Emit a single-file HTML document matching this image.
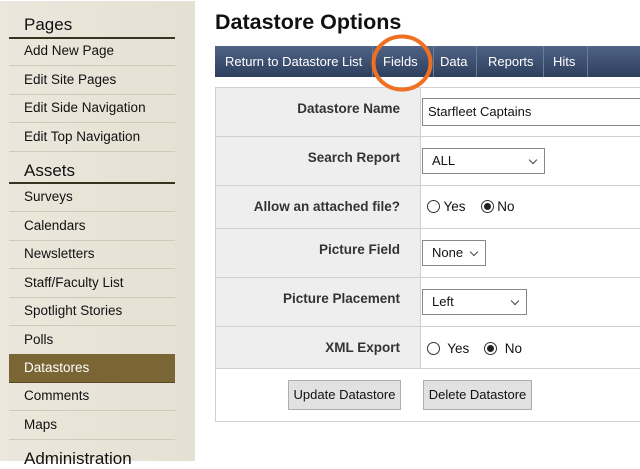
<!DOCTYPE html>
<html><head><style>
*{margin:0;padding:0;box-sizing:border-box}
body{width:640px;height:460px;overflow:hidden;font-family:"Liberation Sans",Arial,sans-serif;background:#fff;position:relative}
#side{position:absolute;left:0;top:1px;width:195px;height:460px;background:linear-gradient(90deg,#ebe7dc,#e4e0d3)}
.h{position:absolute;left:24px;font-size:17px;color:#111}
.ul{position:absolute;left:9px;width:166px;height:2px;background:#3a3220}
.it{position:absolute;left:9px;width:166px;height:28.5px;border-bottom:1px solid #cfc9b6;font-size:13.5px;color:#111;padding-left:15px;line-height:28px}
.it.sel{background:#7a6534;color:#fff;border-bottom:1px solid #5a4a24}
h1{position:absolute;left:215px;top:10px;font-size:21.5px;font-weight:bold;color:#111}
#nav{position:absolute;left:215px;top:46px;width:425px;height:31px;background:linear-gradient(#4f6385,#2e3f5e);color:#fff;font-size:13px}
#nav span{position:absolute;top:0;height:31px;line-height:32px;border-right:1px solid #6b7d9c}
#tbl{position:absolute;left:215px;top:87px;width:430px;height:335px;border:1px solid #d0d0d0}
.row{position:absolute;left:0;width:430px;border-bottom:1px solid #d0d0d0}
.lab{position:absolute;left:0;top:0;bottom:0;width:205px;background:#eeeeee;border-right:1px solid #d0d0d0;text-align:right;padding-right:20px;padding-top:13px;font-size:13.5px;font-weight:bold;color:#333}
.sel2{position:absolute;border:1px solid #888;background:#fff;font-size:13px;color:#111;padding-left:9px;line-height:24px;height:26px}
.sel2:after{content:"";position:absolute;right:8px;top:8px;width:5px;height:5px;border-right:1px solid #444;border-bottom:1px solid #444;transform:rotate(45deg)}
.rad{position:absolute;font-size:13.5px;color:#111}
.c{display:inline-block;width:13px;height:13px;border:1px solid #333;border-radius:50%;vertical-align:-2px;position:relative;background:#fff}
.c.on:after{content:"";position:absolute;left:2px;top:2px;width:7px;height:7px;border-radius:50%;background:#222}
.btn{position:absolute;top:12px;height:30px;background:#e1e1e1;border:1px solid #adadad;font-size:13px;color:#111;line-height:28px;text-align:center}
</style></head><body>
<div id="side">
<div class="h" style="top:14px">Pages</div><div class="ul" style="top:36px"></div>
<div class="it" style="top:36px">Add New Page</div>
<div class="it" style="top:65px">Edit Site Pages</div>
<div class="it" style="top:93px">Edit Side Navigation</div>
<div class="it" style="top:122px">Edit Top Navigation</div>
<div class="h" style="top:160px">Assets</div><div class="ul" style="top:181px"></div>
<div class="it" style="top:182px">Surveys</div>
<div class="it" style="top:211px">Calendars</div>
<div class="it" style="top:239px">Newsletters</div>
<div class="it" style="top:268px">Staff/Faculty List</div>
<div class="it" style="top:296px">Spotlight Stories</div>
<div class="it" style="top:325px">Polls</div>
<div class="it sel" style="top:353px">Datastores</div>
<div class="it" style="top:381px">Comments</div>
<div class="it" style="top:410px">Maps</div>
<div class="h" style="top:448px">Administration</div>
</div>
<h1>Datastore Options</h1>
<div id="nav">
<span style="left:0;width:158px;padding-left:10px">Return to Datastore List</span>
<span style="left:158px;width:61px;padding-left:10px">Fields</span>
<span style="left:219px;width:43px;padding-left:6px">Data</span>
<span style="left:262px;width:67px;padding-left:11px">Reports</span>
<span style="left:329px;width:44px;padding-left:9px">Hits</span>
</div>
<div id="tbl">
<div class="row" style="top:0;height:49px"><div class="lab">Datastore Name</div>
<div style="position:absolute;left:206px;top:10px;width:230px;height:28px;border:1px solid #888;font-size:13px;padding-left:5px;line-height:26px;color:#111">Starfleet Captains</div></div>
<div class="row" style="top:49px;height:49px"><div class="lab">Search Report</div>
<div class="sel2" style="left:206px;top:11px;width:123px">ALL</div></div>
<div class="row" style="top:98px;height:43px"><div class="lab">Allow an attached file?</div>
<div class="rad" style="left:211px;top:13px"><span class="c"></span> Yes &nbsp;&nbsp; <span class="c on"></span> No</div></div>
<div class="row" style="top:141px;height:49px"><div class="lab">Picture Field</div>
<div class="sel2" style="left:206px;top:11px;width:64px">None</div></div>
<div class="row" style="top:190px;height:49px"><div class="lab">Picture Placement</div>
<div class="sel2" style="left:206px;top:11px;width:105px">Left</div></div>
<div class="row" style="top:239px;height:42px"><div class="lab">XML Export</div>
<div class="rad" style="left:211px;top:14px"><span class="c"></span>&nbsp; Yes &nbsp;&nbsp; <span class="c on"></span>&nbsp; No</div></div>
<div class="btn" style="top:292px;left:72px;width:113px">Update Datastore</div>
<div class="btn" style="top:292px;left:207px;width:109px">Delete Datastore</div>
</div>
<svg style="position:absolute;left:0;top:0" width="640" height="460"><ellipse cx="402" cy="63" rx="28.5" ry="26.5" fill="none" stroke="#f07023" stroke-width="4"/></svg>
</body></html>
